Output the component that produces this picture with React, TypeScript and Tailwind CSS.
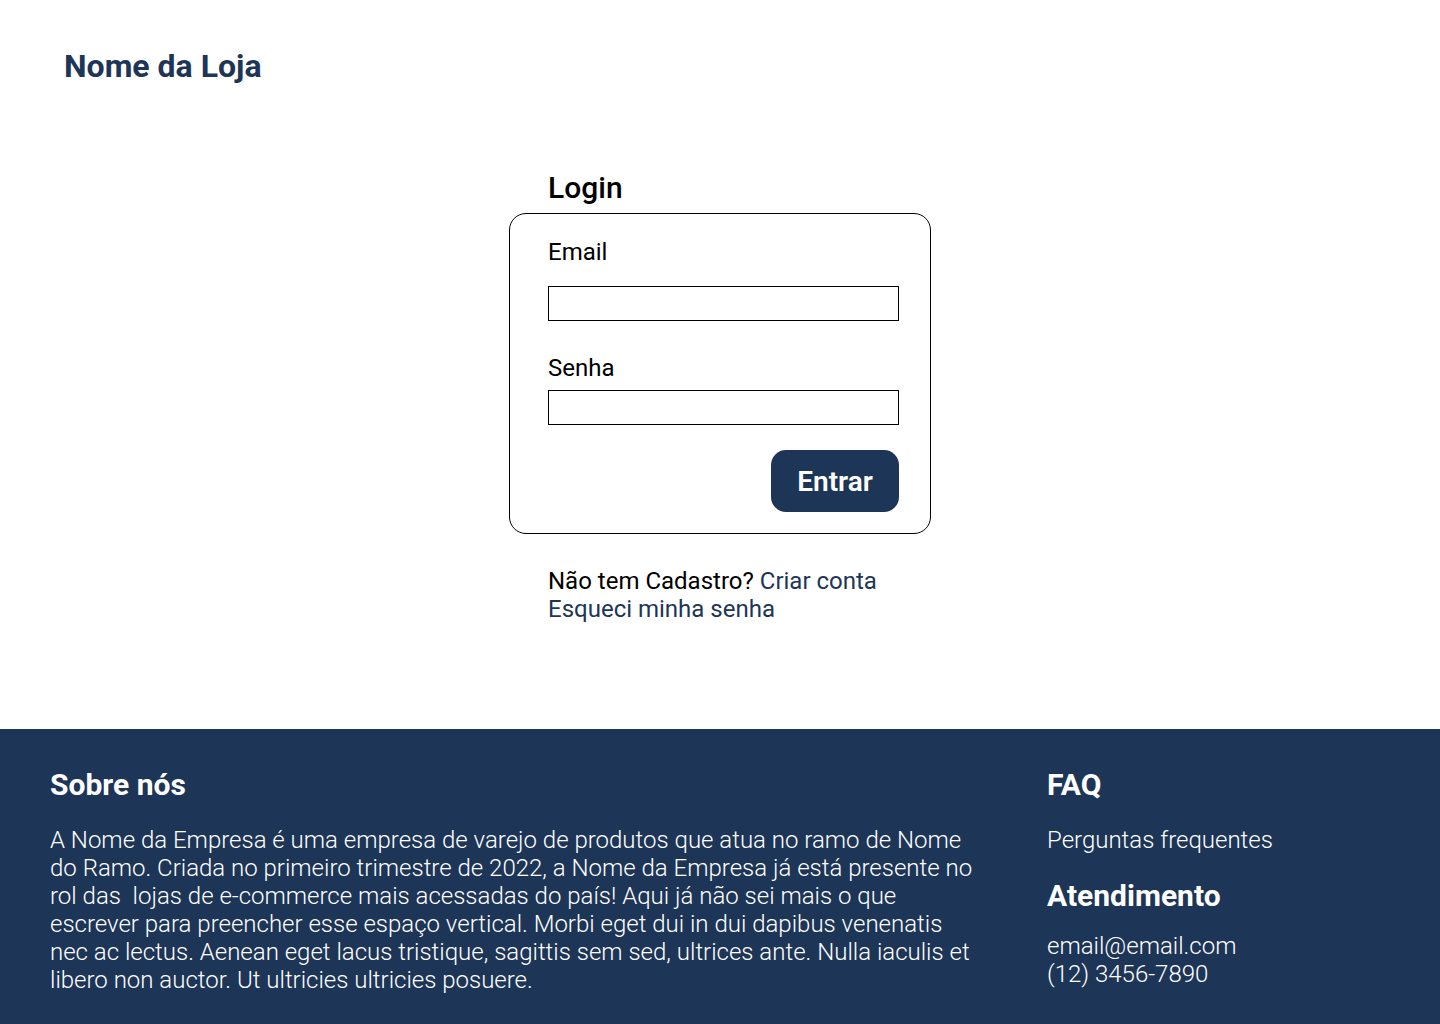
export default function App() {
  return (
    <div className="flex min-h-screen flex-col bg-white font-['Roboto',sans-serif] text-2xl leading-7 text-black">
      <header className="px-16 pt-[47px]">
        <h1 className="text-[32px] leading-[38px] font-bold text-[#1d3557]">Nome da Loja</h1>
      </header>

      <main className="mx-auto mt-[85px] w-full max-w-[422px] pb-[106px]">
        <h2 className="px-[39px] text-3xl leading-[35px] font-medium">Login</h2>
        <form
          className="mt-2 flex flex-col rounded-[17px] border border-black pt-6 pr-[31px] pb-[21px] pl-[38px]"
          onSubmit={(e) => e.preventDefault()}
        >
          <label htmlFor="email">Email</label>
          <input id="email" type="email" className="mt-5 h-[35px] w-full border border-black px-2" />
          <label htmlFor="senha" className="mt-[33px]">Senha</label>
          <input id="senha" type="password" className="mt-2 h-[35px] w-full border border-black px-2" />
          <button
            type="submit"
            className="mt-[25px] h-[62px] w-32 self-end rounded-[15px] bg-[#1d3557] text-[28px] leading-[33px] font-semibold text-white"
          >
            Entrar
          </button>
        </form>
        <div className="mt-[33px] px-[39px]">
          <p>
            Não tem Cadastro? <a href="#criar" className="text-[#1d3557]">Criar conta</a>
          </p>
          <a href="#esqueci" className="block text-[#1d3557]">Esqueci minha senha</a>
        </div>
      </main>

      <footer className="flex grow justify-between bg-[#1d3557] px-[50px] pt-[38px] pb-[30px] font-light text-white">
        <section className="max-w-[931px]">
          <h2 className="text-3xl leading-[35px] font-bold">Sobre nós</h2>
          <p className="mt-6 whitespace-pre-wrap">
            {"A Nome da Empresa é uma empresa de varejo de produtos que atua no ramo de Nome do Ramo. Criada no primeiro trimestre de 2022, a Nome da Empresa já está presente no rol das  lojas de e-commerce mais acessadas do país! Aqui já não sei mais o que escrever para preencher esse espaço vertical. Morbi eget dui in dui dapibus venenatis nec ac lectus. Aenean eget lacus tristique, sagittis sem sed, ultrices ante. Nulla iaculis et libero non auctor. Ut ultricies ultricies posuere."}
          </p>
        </section>
        <section className="w-[343px] shrink-0">
          <h2 className="text-3xl leading-[35px] font-bold">FAQ</h2>
          <a href="#faq" className="mt-6 block">Perguntas frequentes</a>
          <h2 className="mt-6 text-3xl leading-[35px] font-bold">Atendimento</h2>
          <a href="mailto:email@email.com" className="mt-[19px] block">email@email.com</a>
          <p>(12) 3456-7890</p>
        </section>
      </footer>
    </div>
  );
}
